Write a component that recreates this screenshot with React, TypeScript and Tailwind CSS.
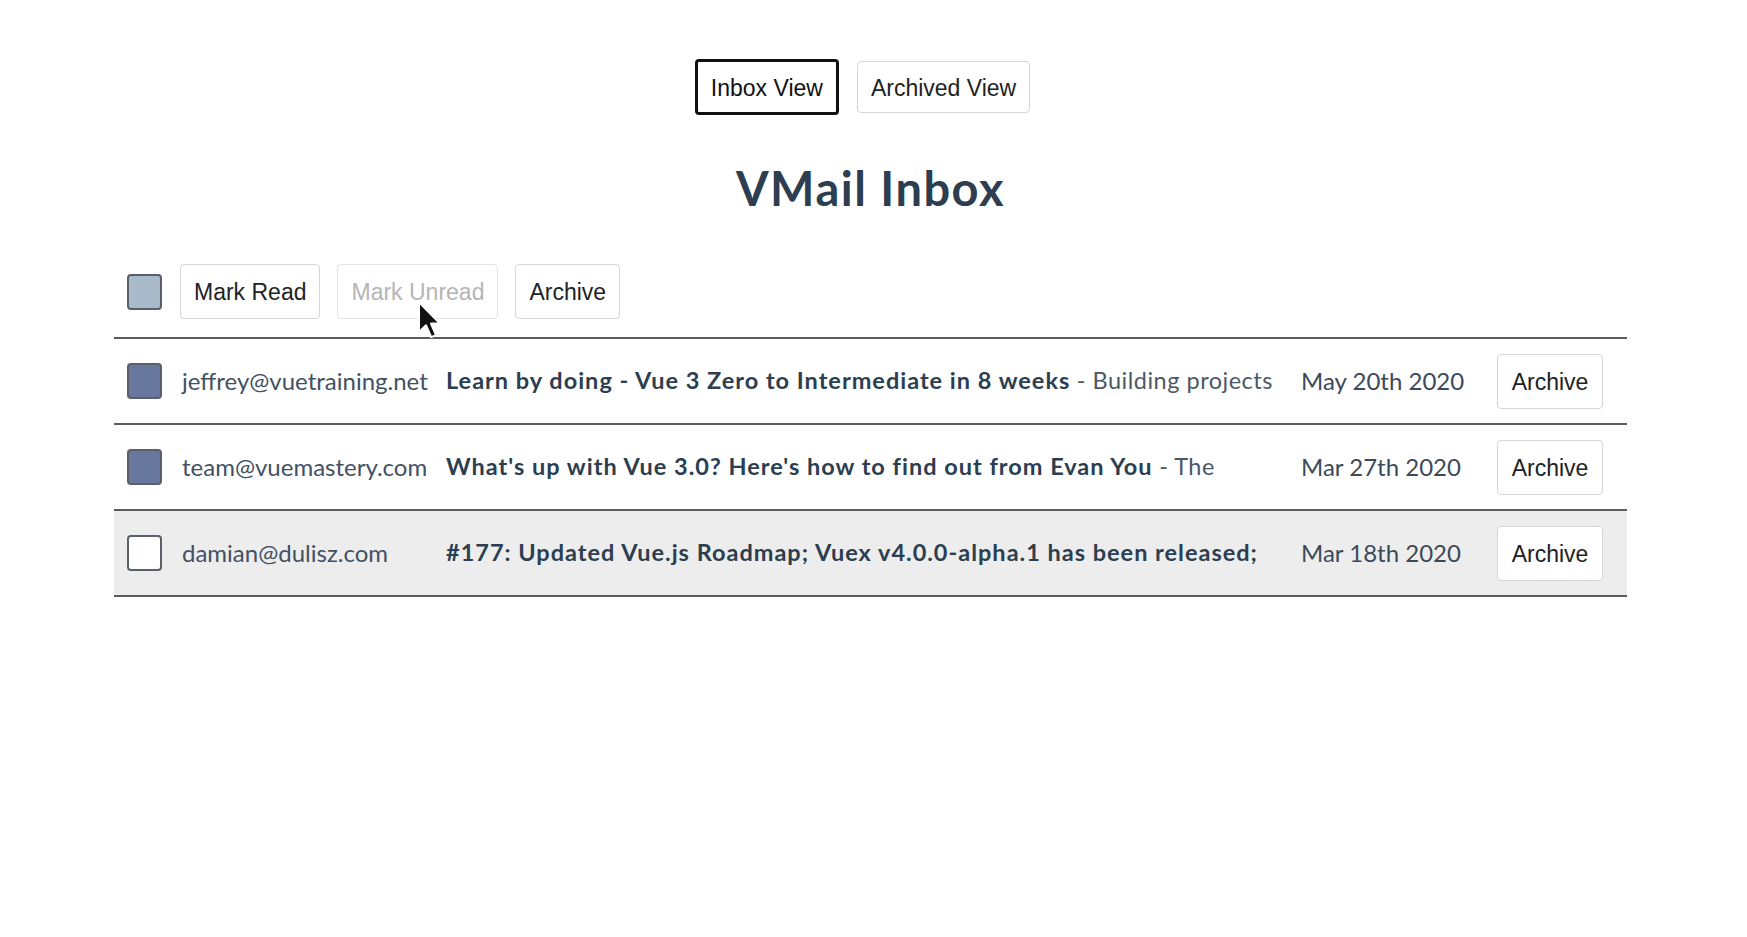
import { useState } from 'react';

type Email = {
  id: number;
  from: string;
  subject: string;
  preview: string;
  date: string;
  read: boolean;
  selected: boolean;
};

const emails: Email[] = [
  {
    id: 1,
    from: 'jeffrey@vuetraining.net',
    subject: 'Learn by doing - Vue 3 Zero to Intermediate in 8 weeks',
    preview: ' - Building projects',
    date: 'May 20th 2020',
    read: false,
    selected: true,
  },
  {
    id: 2,
    from: 'team@vuemastery.com',
    subject: "What's up with Vue 3.0? Here's how to find out from Evan You",
    preview: ' - The',
    date: 'Mar 27th 2020',
    read: false,
    selected: true,
  },
  {
    id: 3,
    from: 'damian@dulisz.com',
    subject: '#177: Updated Vue.js Roadmap; Vuex v4.0.0-alpha.1 has been released;',
    preview: '',
    date: 'Mar 18th 2020',
    read: true,
    selected: false,
  },
];

const btn =
  "h-[55px] px-[13px] pt-[2px] bg-white border border-[#d6d6d6] rounded-[4px] text-[23px] text-[#222] font-['Liberation_Sans',Arial,sans-serif] flex items-center";

const Checkbox = ({ state }: { state: 'checked' | 'partial' | 'empty' }) => {
  const fill =
    state === 'checked' ? 'bg-[#67779d]' : state === 'partial' ? 'bg-[#a9bacb]' : 'bg-white';
  return (
    <div className={`shrink-0 w-[35px] h-[36px] rounded-[4px] border-2 border-[#5a5f68] ${fill}`} />
  );
};

const Cursor = () => (
  <svg
    className="absolute left-[416px] top-[300px] pointer-events-none"
    width="26"
    height="40"
    viewBox="0 0 13 20"
  >
    <path
      d="M1.5 1.2 L1.5 16 L5 12.6 L7.6 18.6 L10 17.6 L7.5 11.8 L12 11.8 Z"
      fill="#111"
      stroke="#fff"
      strokeWidth="1"
      strokeLinejoin="round"
    />
  </svg>
);

export default function App() {
  const [view, setView] = useState<'inbox' | 'archive'>('inbox');

  return (
    <div className="relative min-h-[937px] bg-white text-[#2c3e50] font-['Lato','Noto_Sans',sans-serif]">
      <div className="ml-[114px] w-[1513px] pt-[59px]">
        <div className="flex justify-center items-center gap-[18px] pr-[16px]">
          <button
            onClick={() => setView('inbox')}
            className={`h-[56px] px-[13px] pt-[2px] bg-white rounded-[4px] text-[23px] text-[#111] font-['Liberation_Sans',Arial,sans-serif] ${
              view === 'inbox' ? 'border-[3px] border-[#111]' : 'border border-[#d6d6d6]'
            }`}
          >
            Inbox View
          </button>
          <button
            onClick={() => setView('archive')}
            className={`h-[52px] px-[13px] pt-[2px] bg-white rounded-[4px] text-[23px] text-[#222] font-['Liberation_Sans',Arial,sans-serif] ${
              view === 'archive' ? 'border-[3px] border-[#111]' : 'border border-[#d6d6d6]'
            }`}
          >
            Archived View
          </button>
        </div>

        <h1 className="mt-[45px] text-center text-[47px] font-bold leading-[56px] tracking-[1.5px]">
          VMail Inbox
        </h1>

        <div className="mt-[48px] h-[73px] flex items-start pl-[13px]">
          <div className="flex items-center gap-[18px] h-[55px]">
            <Checkbox state="partial" />
            <div className="flex gap-[17px]">
              <button className={btn}>Mark Read</button>
              <button className={`${btn} text-[#b5b5b5]! border-[#e3e3e3]`}>Mark Unread</button>
              <button className={btn}>Archive</button>
            </div>
          </div>
        </div>

        <div className="border-t-2 border-[#5c5c5c]">
          {emails.map((e) => (
            <div
              key={e.id}
              className={`h-[86px] border-b-2 border-[#5c5c5c] flex items-center pl-[13px] ${
                e.read ? 'bg-[#ededed]' : 'bg-white'
              }`}
            >
              <Checkbox state={e.selected ? 'checked' : 'empty'} />
              <div className="w-[284px] shrink-0 pl-[20px] text-[24px] text-[#435163] whitespace-nowrap">
                {e.from}
              </div>
              <div className="w-[855px] shrink-0 pr-[23px] text-[23.5px] whitespace-nowrap overflow-hidden">
                <span className="font-bold tracking-[1px]">{e.subject}</span>
                <span className="text-[#4a5866] tracking-[0.5px]">{e.preview}</span>
              </div>
              <div className="w-[196px] shrink-0 text-[24px] text-[#3b4a5a] whitespace-nowrap">{e.date}</div>
              <button className={`${btn} w-[106px] shrink-0 justify-center px-0`}>Archive</button>
            </div>
          ))}
        </div>
      </div>
      <Cursor />
    </div>
  );
}
